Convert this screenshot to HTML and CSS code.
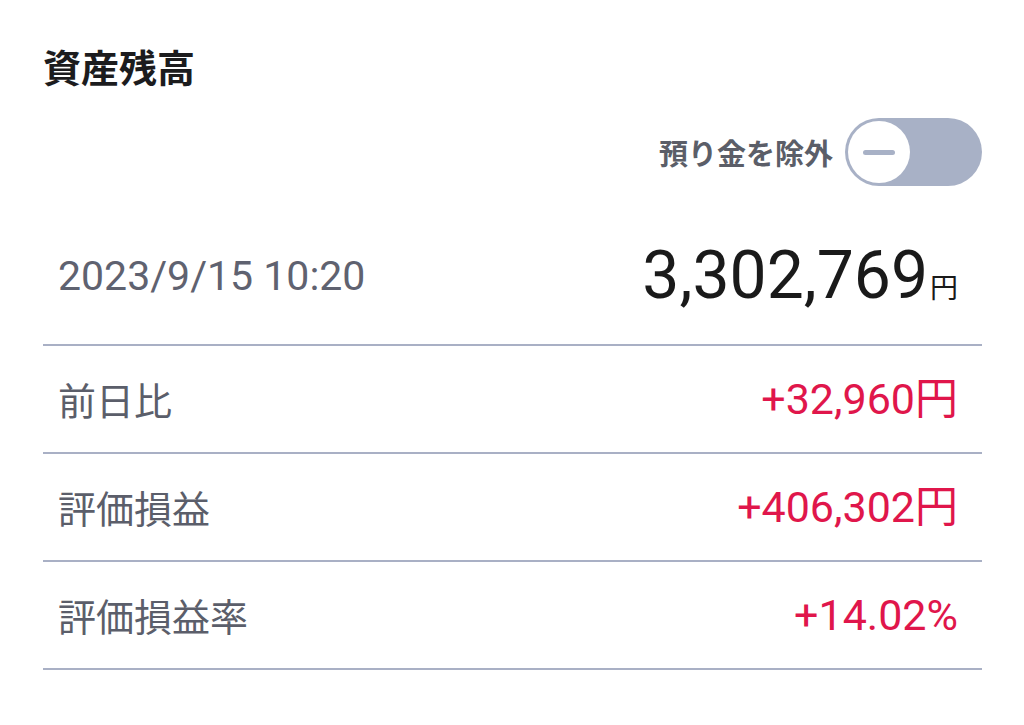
FILE: index.html
```html
<!DOCTYPE html>
<html lang="ja">
<head>
<meta charset="utf-8">
<title>資産残高</title>
<link rel="stylesheet" href="styles.css">
</head>
<body>
<section class="card">
  <h1 class="title">資産残高</h1>
  <div class="toggle-row">
    <span class="toggle-label">預り金を除外</span>
    <span class="toggle" role="switch" aria-checked="false">
      <span class="knob"><span class="minus"></span></span>
    </span>
  </div>
  <div class="total-row">
    <span class="date">2023/9/15 10:20</span>
    <span class="total"><span class="total-num">3,302,769</span><span class="total-yen">円</span></span>
  </div>
  <div class="row">
    <span class="label">前日比</span>
    <span class="value">+32,960円</span>
  </div>
  <div class="row">
    <span class="label">評価損益</span>
    <span class="value">+406,302円</span>
  </div>
  <div class="row">
    <span class="label">評価損益率</span>
    <span class="value">+14.02%</span>
  </div>
</section>
</body>
</html>
```

FILE: styles.css
```css
html, body {
  margin: 0;
  padding: 0;
  background: #ffffff;
}

body {
  font-family: "Roboto", "Noto Sans CJK JP", sans-serif;
  color: #1c1c1e;
}

.card {
  padding: 0 42px 0 43px;
}

.title {
  margin: 46px 0 0 0;
  font-family: "Noto Sans CJK JP", sans-serif;
  font-size: 38px;
  font-weight: 700;
  line-height: 40px;
  color: #1c1c1e;
}

.toggle-row {
  display: flex;
  justify-content: flex-end;
  align-items: center;
  gap: 12px;
  margin-top: 32px;
}

.toggle-label {
  font-family: "Noto Sans CJK JP", sans-serif;
  font-size: 29px;
  font-weight: 700;
  color: #5b5e68;
  line-height: 1;
}

.toggle {
  display: flex;
  align-items: center;
  box-sizing: border-box;
  width: 137px;
  height: 68px;
  padding: 0 3px;
  border-radius: 34px;
  background: #a8b1c6;
}

.knob {
  display: flex;
  align-items: center;
  justify-content: center;
  width: 62px;
  height: 62px;
  border-radius: 50%;
  background: #ffffff;
}

.minus {
  width: 32px;
  height: 5px;
  border-radius: 3px;
  background: #a8b1c6;
}

.total-row {
  display: flex;
  justify-content: space-between;
  align-items: center;
  box-sizing: border-box;
  height: 160px;
  padding: 22px 24px 0 15px;
  border-bottom: 2px solid #a9b0c5;
}

.date {
  font-size: 41px;
  color: #5f6270;
  line-height: 1;
}

.total {
  color: #1a1a1a;
  line-height: 1;
}

.total-num {
  font-size: 66px;
}

.total-yen {
  font-family: "Noto Sans CJK JP", sans-serif;
  font-size: 28px;
  margin-left: 2px;
}

.row {
  display: flex;
  justify-content: space-between;
  align-items: center;
  box-sizing: border-box;
  height: 108px;
  padding: 0 24px 0 15px;
  border-bottom: 2px solid #a9b0c5;
}

.label {
  font-family: "Noto Sans CJK JP", sans-serif;
  font-size: 38px;
  color: #5b5e6a;
  line-height: 1;
}

.value {
  font-size: 43px;
  color: #e0164b;
  line-height: 1;
}
```
